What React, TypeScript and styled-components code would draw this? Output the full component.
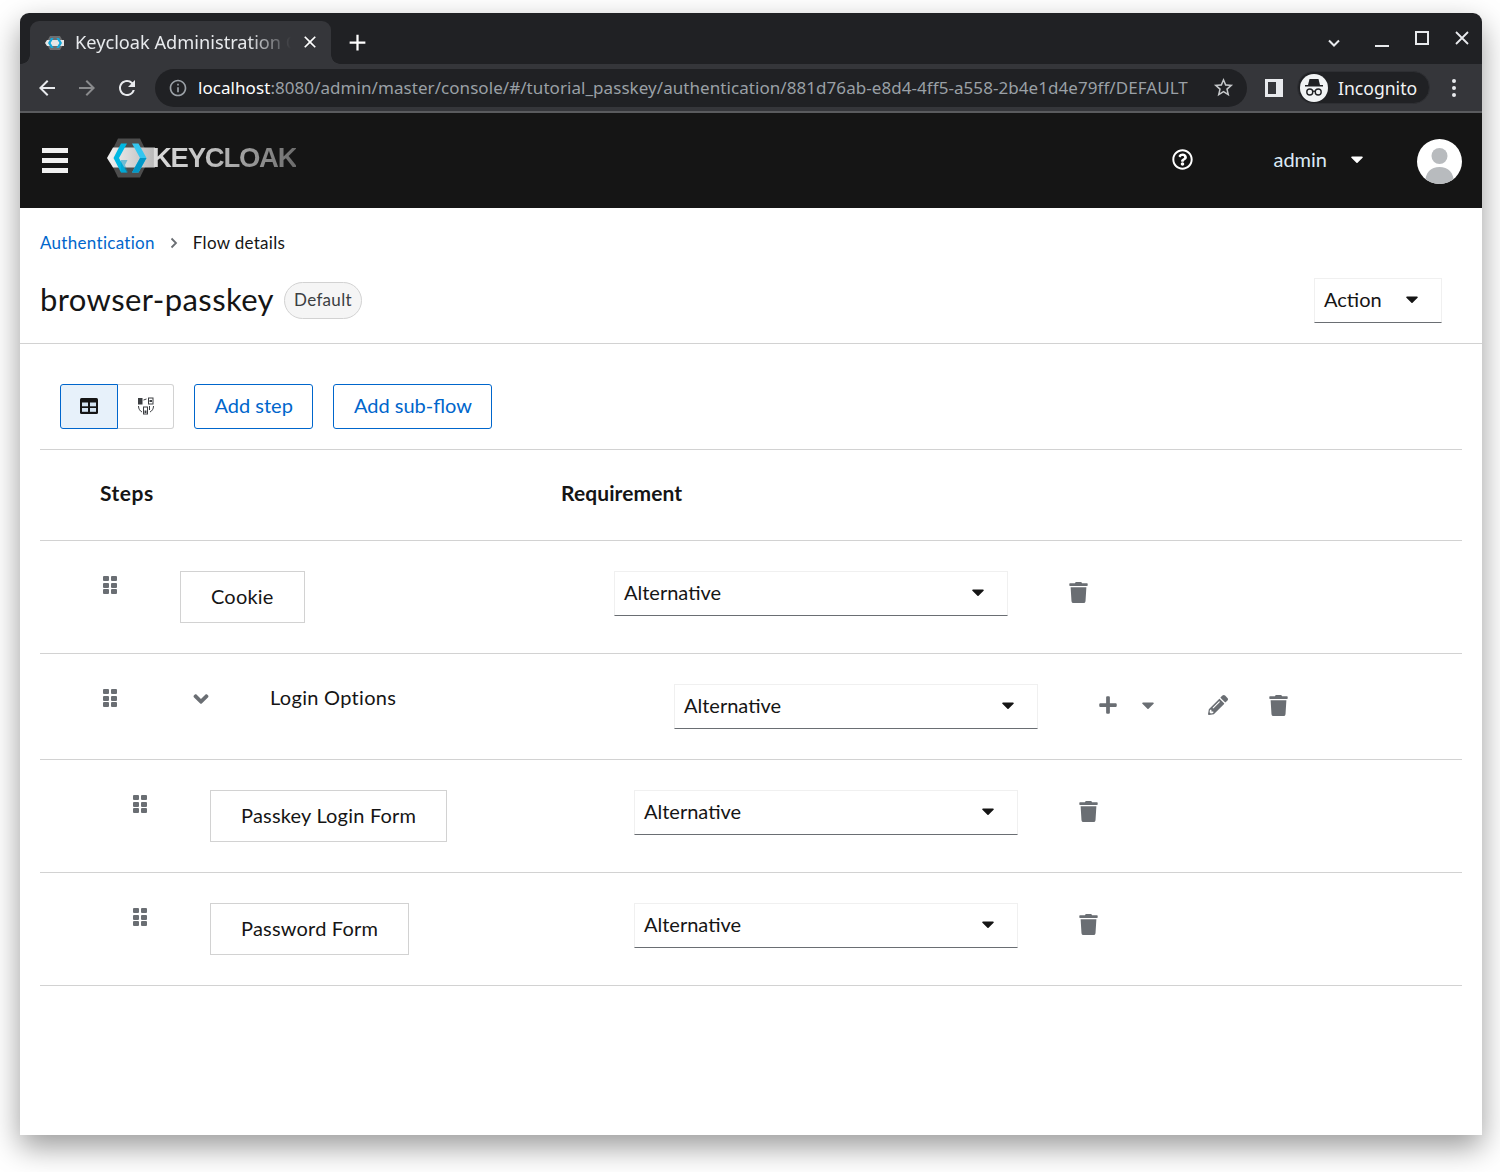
import styled, { createGlobalStyle } from "styled-components"
import { MdArrowBack, MdArrowForward, MdRefresh, MdInfoOutline, MdStarBorder, MdClose, MdAdd } from "react-icons/md"
import { FaAngleDown, FaCaretDown, FaPencilAlt, FaPlus, FaRegQuestionCircle, FaTrash } from "react-icons/fa"

const GlobalStyle = createGlobalStyle`
    html, body {
        margin: 0;
        padding: 0;
        background: #fff;
    }
    body {
        font-family: "Lato", "Liberation Sans", sans-serif;
        color: #151515;
    }
`
const Page = styled.div`
    width: 1500px;
    height: 1172px;
    padding: 13px 18px 37px 20px;
    box-sizing: border-box;
    overflow: hidden;
`
const BrowserWindow = styled.div`
    height: 1122px;
    background: #fff;
    border-radius: 9px 9px 0 0;
    box-shadow: 0 12px 30px rgba(0, 0, 0, 0.4);
    display: flex;
    flex-direction: column;
    overflow: hidden;
`
const TabStrip = styled.div`
    height: 51px;
    flex-shrink: 0;
    background: #202124;
    display: flex;
    align-items: flex-end;
    padding-left: 10px;
    color: #fff;
    font-family: "Noto Sans", sans-serif;
`
const Tab = styled.div`
    position: relative;
    width: 301px;
    height: 43px;
    background: #35363a;
    border-radius: 9px 9px 0 0;
    display: flex;
    align-items: center;
    padding: 0 7px 0 15px;
    box-sizing: border-box;
    &::before,
    &::after {
        content: "";
        position: absolute;
        bottom: 0;
        width: 9px;
        height: 9px;
    }
    &::before {
        left: -9px;
        background: radial-gradient(circle at 0 0, #202124 8.5px, #35363a 9px);
    }
    &::after {
        right: -9px;
        background: radial-gradient(circle at 100% 0, #202124 8.5px, #35363a 9px);
    }
`
const TabTitle = styled.div`
    margin-left: 10px;
    width: 216px;
    height: 25px;
    font-size: 18.2px;
    line-height: 25px;
    white-space: nowrap;
    overflow: hidden;
    color: #e8eaed;
    -webkit-mask-image: linear-gradient(90deg, #000 80%, transparent 100%);
    mask-image: linear-gradient(90deg, #000 80%, transparent 100%);
`
const TabClose = styled.div`
    display: flex;
    margin: 0 0 2px 9px;
    font-size: 20px;
`
const NewTab = styled.div`
    display: flex;
    font-size: 27px;
    margin: 0 auto 8px 13px;
`
const WindowControls = styled.div`
    display: flex;
    align-items: flex-start;
    align-self: flex-start;
    margin-top: 13px;
    color: #e8eaed;
`
const WindowButton = styled.div<{ $width: number }>`
    width: ${(props) => props.$width}px;
    height: 24px;
    display: flex;
    align-items: center;
    justify-content: center;
`
const Toolbar = styled.div`
    height: 49px;
    flex-shrink: 0;
    background: #35363a;
    border-bottom: 2px solid #5a5b5e;
    display: flex;
    align-items: center;
    color: #e8eaed;
    font-family: "Noto Sans", sans-serif;
    box-sizing: border-box;
`
const NavButton = styled.div<{ $dim?: boolean }>`
    width: 40px;
    display: flex;
    justify-content: center;
    font-size: 24px;
    color: ${(props) => (props.$dim ? "#8a8b8d" : "#e8eaed")};
`
const NavGroup = styled.div`
    display: flex;
    padding-left: 7px;
    width: 135px;
    box-sizing: border-box;
`
const AddressBar = styled.div`
    width: 1092px;
    height: 38px;
    border-radius: 19px;
    background: #202124;
    display: flex;
    align-items: center;
    padding-left: 13px;
    box-sizing: border-box;
    font-size: 17px;
`
const InfoIcon = styled.div`
    display: flex;
    font-size: 20px;
    color: #9aa0a6;
`
const Url = styled.div`
    margin-left: 10px;
    width: 1014px;
    white-space: nowrap;
    color: #9aa0a6;
    letter-spacing: 0.06px;
    span {
        color: #fff;
    }
`
const StarIcon = styled.div`
    display: flex;
    font-size: 23px;
    color: #c4c7c9;
`
const SidePanel = styled.div`
    width: 18px;
    height: 18px;
    margin-left: 18px;
    box-sizing: border-box;
    border: 3px solid #e8eaed;
    border-right-width: 7px;
`
const IncognitoPill = styled.div`
    width: 133px;
    height: 33px;
    margin-left: 14px;
    border-radius: 17px;
    background: #202124;
    border: 1px solid #2e2f33;
    box-sizing: border-box;
    display: flex;
    align-items: center;
    padding-left: 2px;
    font-size: 17.6px;
    color: #f1f3f4;
`
const IncognitoBadge = styled.div`
    width: 28px;
    height: 28px;
    border-radius: 50%;
    background: #f1f3f4;
    display: flex;
    align-items: center;
    justify-content: center;
    margin-right: 10px;
`
const Kebab = styled.div`
    margin-left: 22px;
    display: flex;
    flex-direction: column;
    gap: 3px;
    i {
        width: 4px;
        height: 4px;
        border-radius: 50%;
        background: #e8eaed;
    }
`
const Masthead = styled.div`
    height: 95px;
    flex-shrink: 0;
    background: #151515;
    display: flex;
    align-items: center;
    padding: 0 20px 0 22px;
    color: #fff;
`
const Hamburger = styled.div`
    width: 26px;
    display: flex;
    flex-direction: column;
    gap: 5px;
    margin-right: 39px;
    i {
        height: 5px;
        background: #f0f0f0;
    }
`
const Brand = styled.div`
    display: flex;
    align-items: center;
    margin: 0 auto 5px 0;
`
const BrandName = styled.div`
    margin-left: -3px;
    font-family: "Liberation Sans", sans-serif;
    font-weight: 700;
    font-size: 27.5px;
    letter-spacing: -1.25px;
    background: linear-gradient(90deg, #dcdcdc 0%, #c0c0c0 40%, #6c6c6c 100%);
    -webkit-background-clip: text;
    background-clip: text;
    color: transparent;
`
const HelpIcon = styled.div`
    display: flex;
    font-size: 21px;
    margin: 0 80px 3px 0;
`
const UserName = styled.div`
    font-size: 20px;
    color: #dbe9f5;
    margin-bottom: 3px;
`
const UserCaret = styled.div`
    display: flex;
    font-size: 20px;
    margin: 0 50px 3px 20px;
`
const Avatar = styled.div`
    width: 45px;
    height: 45px;
    display: flex;
    margin-top: 2px;
`
const Crumbs = styled.div`
    display: flex;
    align-items: center;
    padding: 24px 20px 0;
    height: 21px;
    font-size: 17px;
    letter-spacing: 0.3px;
`
const CrumbLink = styled.a`
    color: #06c;
`
const CrumbSep = styled.div`
    display: flex;
    margin: 0 15px;
    color: #6a6e73;
`
const TitleRow = styled.div`
    display: flex;
    align-items: center;
    padding: 25px 40px 20px 20px;
    height: 45px;
    border-bottom: 1px solid #d2d2d2;
`
const Title = styled.h1`
    margin: -4px 0 0;
    font-size: 31px;
    font-weight: 400;
    letter-spacing: 0.4px;
`
const DefaultLabel = styled.div`
    margin: 0 auto 0 10px;
    height: 37px;
    width: 78px;
    box-sizing: border-box;
    border: 1px solid #d2d2d2;
    border-radius: 19px;
    background: #f5f5f5;
    display: flex;
    align-items: center;
    justify-content: center;
    padding-bottom: 2px;
    font-size: 17px;
    letter-spacing: 0.3px;
    color: #3c3f42;
`
const Dropdown = styled.div<{ $width: number }>`
    width: ${(props) => props.$width}px;
    height: 45px;
    box-sizing: border-box;
    border: 1px solid #f0f0f0;
    border-bottom-color: #6a6e73;
    display: flex;
    align-items: center;
    justify-content: space-between;
    padding: 0 19px 3px 9px;
    font-size: 20px;
    flex-shrink: 0;
`
const Caret = styled.div`
    display: flex;
    font-size: 20px;
    color: #151515;
`
const Content = styled.div`
    padding: 40px 20px 0;
`
const Actions = styled.div`
    display: flex;
    align-items: stretch;
    height: 45px;
    padding: 0 0 20px 20px;
    border-bottom: 1px solid #d2d2d2;
`
const Toggle = styled.div<{ $active?: boolean; $right?: boolean }>`
    width: ${(props) => (props.$active ? 58 : 56)}px;
    box-sizing: border-box;
    display: flex;
    align-items: center;
    justify-content: center;
    padding-bottom: 2px;
    background: ${(props) => (props.$active ? "#e7f1fa" : "#fff")};
    border: 1px solid ${(props) => (props.$active ? "#06c" : "#d2d2d2")};
    border-left-width: ${(props) => (props.$right ? 0 : 1)}px;
    border-radius: ${(props) => (props.$right ? "0 3px 3px 0" : "3px 0 0 3px")};
`
const OutlineButton = styled.div`
    margin-left: 20px;
    padding: 0 19.5px 3px;
    display: flex;
    align-items: center;
    border: 1px solid #06c;
    border-radius: 3px;
    color: #06c;
    font-size: 20px;
`
const TableHead = styled.div`
    display: flex;
    align-items: center;
    height: 91px;
    padding: 0 0 6px 60px;
    box-sizing: border-box;
    font-size: 21px;
    letter-spacing: 0.1px;
    font-weight: 700;
    border-bottom: 1px solid #d2d2d2;
`
const ColSteps = styled.div`
    width: 461px;
    letter-spacing: 0.5px;
`
const Row = styled.div<{ $indent: number }>`
    display: flex;
    align-items: flex-start;
    padding: 30px 0 30px ${(props) => props.$indent}px;
    border-bottom: 1px solid #d2d2d2;
`
const Grip = styled.div`
    width: 80px;
    padding: 5px 0 0 3px;
    box-sizing: border-box;
    flex-shrink: 0;
    display: grid;
    grid-template-columns: 6px 6px;
    grid-auto-rows: 5px;
    gap: 1.5px;
    i {
        background: #6a6e73;
        border-radius: 1px;
    }
`
const StepCell = styled.div<{ $width: number }>`
    width: ${(props) => props.$width}px;
    flex-shrink: 0;
    display: flex;
    align-items: flex-start;
`
const StepBox = styled.div`
    height: 52px;
    padding: 0 30px 3px;
    box-sizing: border-box;
    border: 1px solid #d2d2d2;
    display: flex;
    align-items: center;
    font-size: 20px;
    letter-spacing: 0.2px;
`
const Chevron = styled.div`
    display: flex;
    width: 90px;
    padding: 3px 0 0 9px;
    box-sizing: border-box;
    font-size: 24px;
    color: #6a6e73;
`
const FlowName = styled.div`
    font-size: 20px;
    line-height: 26px;
    letter-spacing: 0.3px;
`
const Tools = styled.div`
    display: flex;
    align-items: center;
    height: 42px;
    margin-left: 60px;
    color: #6a6e73;
`
const Tool = styled.div<{ $width: number; $size: number }>`
    width: ${(props) => props.$width}px;
    display: flex;
    font-size: ${(props) => props.$size}px;
`

const steps = [
    { key: "cookie", name: "Cookie", indent: 60, cell: 434, select: 394 },
    { key: "login", name: "Login Options", indent: 60, cell: 494, select: 364, flow: true },
    { key: "passkey", name: "Passkey Login Form", indent: 90, cell: 424, select: 384 },
    { key: "password", name: "Password Form", indent: 90, cell: 424, select: 384 },
]

function GripDots() {
    return (
        <Grip>
            {[0, 1, 2, 3, 4, 5].map((i) => (
                <i key={i} />
            ))}
        </Grip>
    )
}

function LogoMark() {
    return (
        <svg width="48" height="40" viewBox="0 0 48 40">
            <defs>
                <linearGradient id="band" x1="0" x2="1" y1="0" y2="0">
                    <stop offset="0" stopColor="#f2f2f2" />
                    <stop offset="1" stopColor="#b8b8b8" />
                </linearGradient>
            </defs>
            <path d="M11 0.5h22l9.5 19.5-9.5 19.5H11L1.5 20z" fill="#4d4d4d" />
            <path d="M6 9.5h42v20H6L0 20z" fill="url(#band)" />
            <path d="M14 5.5h6L12 20l8 14.5h-6L6.5 20z" fill="#00b8e3" />
            <path d="M14 22h6.5L18 27l3 7.5h-7z" fill="#0097c7" opacity="0.5" />
            <path d="M25 5.5h6.5L39.5 20l-8 14.5H25L33 20z" fill="#33c6f0" />
            <path d="M25 34.5L33 20h6.5l-8 14.5z" fill="#0097c7" />
        </svg>
    )
}

function FavIcon() {
    return (
        <svg width="20" height="14" viewBox="0 0 20 14">
            <path d="M5 0h10l4 7-4 7H5L1 7z" fill="#6d6e70" />
            <path d="M0 7l2-3h17v6H2z" fill="#e6e6e6" />
            <path d="M6 2h2.6L5.6 7l3 5H6L3 7z" fill="#16a9dc" />
            <path d="M11.4 2H14l3 5-3 5h-2.6l3-5z" fill="#16a9dc" />
        </svg>
    )
}

function TopologyIcon() {
    return (
        <svg width="20" height="20" viewBox="0 0 20 20" fill="none" stroke="#3c3f42" strokeWidth="1">
            <rect x="2.5" y="2.5" width="3.5" height="5.5" fill="#3c3f42" />
            <rect x="12.5" y="2" width="4.5" height="6" />
            <rect x="13.5" y="4" width="2.5" height="2" fill="#3c3f42" stroke="none" />
            <rect x="7.5" y="11" width="4" height="7" />
            <rect x="8.5" y="14.5" width="2" height="2.5" fill="#3c3f42" stroke="none" />
            <path d="M7.5 4l3-1M2.5 10c0 3 1.5 5 3.5 6M14 16c2-1 3.5-3 3.5-6M13.5 10v4" />
        </svg>
    )
}

function TableIcon() {
    return (
        <svg width="18" height="16" viewBox="0 0 18 16">
            <rect width="18" height="16" rx="1.5" fill="#151515" />
            <rect x="2" y="4.5" width="6" height="3.8" fill="#d4e4f2" />
            <rect x="10" y="4.5" width="6" height="3.8" fill="#d4e4f2" />
            <rect x="2" y="10" width="6" height="3.8" fill="#d4e4f2" />
            <rect x="10" y="10" width="6" height="3.8" fill="#d4e4f2" />
        </svg>
    )
}

export default function App() {
    return (
        <Page>
            <GlobalStyle />
            <BrowserWindow>
                <TabStrip>
                    <Tab>
                        <FavIcon />
                        <TabTitle>Keycloak Administration Console</TabTitle>
                        <TabClose>
                            <MdClose />
                        </TabClose>
                    </Tab>
                    <NewTab>
                        <MdAdd />
                    </NewTab>
                    <WindowControls>
                        <WindowButton $width={56}>
                            <svg width="14" height="24" viewBox="0 0 14 24" fill="none" stroke="#e8eaed" strokeWidth="2">
                                <path d="M2 14.5l5 5 5-5" />
                            </svg>
                        </WindowButton>
                        <WindowButton $width={40}>
                            <svg width="16" height="24" viewBox="0 0 16 24" fill="#e8eaed">
                                <rect x="1" y="19" width="14" height="2" />
                            </svg>
                        </WindowButton>
                        <WindowButton $width={40}>
                            <svg width="14" height="14" viewBox="0 0 14 14" fill="none" stroke="#e8eaed" strokeWidth="2">
                                <rect x="1" y="1" width="12" height="12" />
                            </svg>
                        </WindowButton>
                        <WindowButton $width={40}>
                            <svg width="14" height="14" viewBox="0 0 14 14" fill="none" stroke="#e8eaed" strokeWidth="1.8">
                                <path d="M1 1l12 12M13 1L1 13" />
                            </svg>
                        </WindowButton>
                    </WindowControls>
                </TabStrip>
                <Toolbar>
                    <NavGroup>
                        <NavButton>
                            <MdArrowBack />
                        </NavButton>
                        <NavButton $dim>
                            <MdArrowForward />
                        </NavButton>
                        <NavButton>
                            <MdRefresh />
                        </NavButton>
                    </NavGroup>
                    <AddressBar>
                        <InfoIcon>
                            <MdInfoOutline />
                        </InfoIcon>
                        <Url>
                            <span>localhost</span>
                            :8080/admin/master/console/#/tutorial_passkey/authentication/881d76ab-e8d4-4ff5-a558-2b4e1d4e79ff/DEFAULT
                        </Url>
                        <StarIcon>
                            <MdStarBorder />
                        </StarIcon>
                    </AddressBar>
                    <SidePanel />
                    <IncognitoPill>
                        <IncognitoBadge>
                            <svg width="22" height="20" viewBox="0 0 22 20" fill="#202124">
                                <path d="M6.5 1h9l1.5 6h3v1.5H2V7h3z" />
                                <circle cx="6.8" cy="14" r="3" fill="none" stroke="#202124" strokeWidth="1.4" />
                                <circle cx="15.2" cy="14" r="3" fill="none" stroke="#202124" strokeWidth="1.4" />
                                <path d="M9.8 13.5c.8-.5 1.6-.5 2.4 0" fill="none" stroke="#202124" strokeWidth="1.2" />
                            </svg>
                        </IncognitoBadge>
                        Incognito
                    </IncognitoPill>
                    <Kebab>
                        <i />
                        <i />
                        <i />
                    </Kebab>
                </Toolbar>
                <Masthead>
                    <Hamburger>
                        <i />
                        <i />
                        <i />
                    </Hamburger>
                    <Brand>
                        <LogoMark />
                        <BrandName>KEYCLOAK</BrandName>
                    </Brand>
                    <HelpIcon>
                        <FaRegQuestionCircle />
                    </HelpIcon>
                    <UserName>admin</UserName>
                    <UserCaret>
                        <FaCaretDown />
                    </UserCaret>
                    <Avatar>
                        <svg width="45" height="45" viewBox="0 0 45 45">
                            <defs>
                                <clipPath id="avatarClip">
                                    <circle cx="22.5" cy="22.5" r="22.5" />
                                </clipPath>
                            </defs>
                            <circle cx="22.5" cy="22.5" r="22.5" fill="#fff" />
                            <g clipPath="url(#avatarClip)" fill="#b8bbbe">
                                <circle cx="22.5" cy="17" r="8" />
                                <path d="M8 45c0-12 6-17 14.5-17S37 33 37 45z" />
                            </g>
                        </svg>
                    </Avatar>
                </Masthead>
                <Crumbs>
                    <CrumbLink>Authentication</CrumbLink>
                    <CrumbSep>
                        <svg width="8" height="12" viewBox="0 0 8 12" fill="none" stroke="#6a6e73" strokeWidth="1.8">
                            <path d="M1.5 1.5L6 6l-4.5 4.5" />
                        </svg>
                    </CrumbSep>
                    Flow details
                </Crumbs>
                <TitleRow>
                    <Title>browser-passkey</Title>
                    <DefaultLabel>Default</DefaultLabel>
                    <Dropdown $width={128}>
                        Action
                        <Caret>
                            <FaCaretDown />
                        </Caret>
                    </Dropdown>
                </TitleRow>
                <Content>
                    <Actions>
                        <Toggle $active>
                            <TableIcon />
                        </Toggle>
                        <Toggle $right>
                            <TopologyIcon />
                        </Toggle>
                        <OutlineButton>Add step</OutlineButton>
                        <OutlineButton>Add sub-flow</OutlineButton>
                    </Actions>
                    <TableHead>
                        <ColSteps>Steps</ColSteps>
                        Requirement
                    </TableHead>
                    {steps.map((step) => (
                        <Row key={step.key} $indent={step.indent}>
                            <GripDots />
                            <StepCell $width={step.cell}>
                                {step.flow ? (
                                    <>
                                        <Chevron>
                                            <FaAngleDown />
                                        </Chevron>
                                        <FlowName>{step.name}</FlowName>
                                    </>
                                ) : (
                                    <StepBox>{step.name}</StepBox>
                                )}
                            </StepCell>
                            <Dropdown $width={step.select}>
                                Alternative
                                <Caret>
                                    <FaCaretDown />
                                </Caret>
                            </Dropdown>
                            <Tools>
                                {step.flow && (
                                    <>
                                        <Tool $width={40} $size={20}>
                                            <FaPlus />
                                        </Tool>
                                        <Tool $width={70} $size={20}>
                                            <FaCaretDown />
                                        </Tool>
                                        <Tool $width={60} $size={20}>
                                            <FaPencilAlt />
                                        </Tool>
                                    </>
                                )}
                                <Tool $width={21} $size={21}>
                                    <FaTrash />
                                </Tool>
                            </Tools>
                        </Row>
                    ))}
                </Content>
            </BrowserWindow>
        </Page>
    )
}
